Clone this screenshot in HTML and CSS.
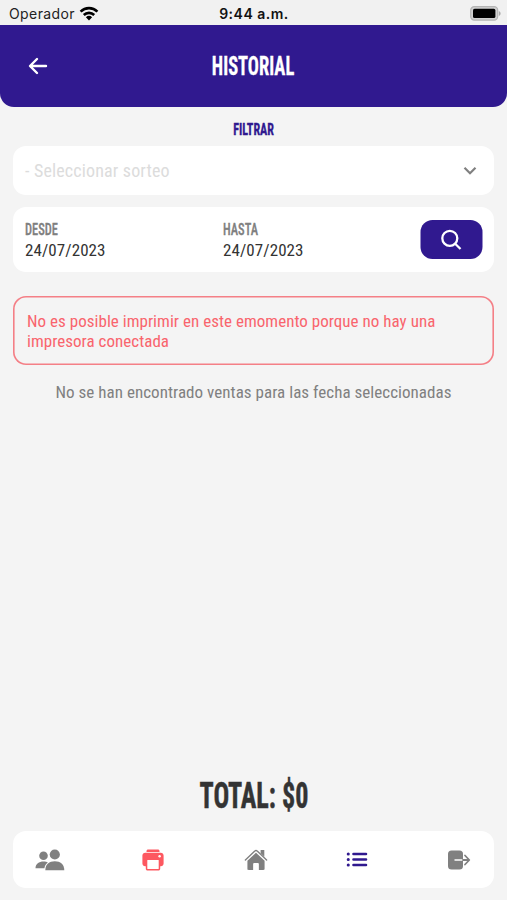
FILE: index.html
```html
<!DOCTYPE html>
<html lang="es">
<head>
  <meta charset="UTF-8" />
  <meta name="viewport" content="width=device-width, initial-scale=1.0" />
  <title>Historial</title>
  <link rel="stylesheet" href="styles.css">
</head>
<body>
  <div class="status-bar">
    <div class="carrier">
      <span>Operador</span>
      <svg width="20" height="15" viewBox="0 0 20 15" fill="none" stroke="#000" stroke-width="2.6">
        <path d="M1.6 5.6a12 12 0 0 1 16.8 0" />
        <path d="M4.8 9a7.4 7.4 0 0 1 10.4 0" />
        <path d="M10 14.4L6.9 11.2a4.5 4.5 0 0 1 6.2 0z" fill="#000" stroke="none" />
      </svg>
    </div>
    <span class="time">9:44 a.m.</span>
    <svg class="battery" width="31" height="15" viewBox="0 0 31 15">
      <rect x="0.7" y="0.7" width="27" height="13.4" rx="3.6" fill="#d0d0d0" stroke="#b4b4b4" stroke-width="1.2" />
      <rect x="3" y="2.8" width="22.4" height="9.2" rx="1.6" fill="#000" />
      <path d="M28.8 5v5c2.4-.8 2.4-4.2 0-5z" fill="#aaa" />
    </svg>
  </div>

  <header class="header">
    <svg class="back" width="20" height="18" viewBox="0 0 20 18" fill="none" stroke="#fff" stroke-width="2.4" stroke-linecap="round" stroke-linejoin="round">
      <path d="M18 9H2.5M9 2L2 9l7 7" />
    </svg>
    <h1><span class="narrow">HISTORIAL</span></h1>
  </header>

  <main class="content">
    <h2><span class="narrow">FILTRAR</span></h2>

    <div class="card select">
      <span class="placeholder">- Seleccionar sorteo</span>
      <svg width="14" height="10" viewBox="0 0 14 10" fill="none" stroke="#808080" stroke-width="2.2">
        <path d="M1.5 1.7L7 7.2l5.5-5.5" />
      </svg>
    </div>

    <div class="card dates">
      <div class="date">
        <span class="label">DESDE</span>
        <span class="value">24/07/2023</span>
      </div>
      <div class="date">
        <span class="label">HASTA</span>
        <span class="value">24/07/2023</span>
      </div>
      <button class="search" aria-label="Buscar">
        <svg width="22" height="22" viewBox="0 0 22 22" fill="none" stroke="#fff" stroke-width="2.3">
          <circle cx="9.3" cy="9.3" r="7.5" />
          <path d="M14.7 14.7l5.3 5.3" />
        </svg>
      </button>
    </div>

    <div class="alert">
      <span class="line">No es posible imprimir en este emomento porque no hay una</span>
      <span class="line">impresora conectada</span>
    </div>

    <p class="empty">No se han encontrado ventas para las fecha seleccionadas</p>
  </main>

  <div class="total"><span class="total-text">TOTAL: $0</span></div>

  <nav class="tabs">
    <svg width="30" height="22" viewBox="0 0 30 22" fill="#808080">
      <circle cx="8.5" cy="6.7" r="4.3" />
      <circle cx="19.8" cy="5.5" r="5.1" />
      <path d="M.5 19.2c0-4.300 3.500-6.700 8-6.700 2 0 3.200.3 4.300.9-2 1.500-3 3.300-3.400 5.800z" />
      <path d="M10.300 21.200c0-5.700 4-8.900 9.500-8.900s9.500 3.200 9.500 8.900z" />
    </svg>
    <svg width="22" height="22" viewBox="0 0 22 22">
      <path d="M4.500 2.900V2c0-1 .7-1.600 1.600-1.600h9.800c.9 0 1.600.6 1.600 1.600v.9z" fill="#fd5860" />
      <path d="M3.300 3.700h15.400c1.700 0 2.900 1.200 2.900 2.900v7.900c0 1.500-1.200 2.700-2.700 2.700h-.7v2.500c0 1-.8 1.800-1.800 1.800H5.600c-1 0-1.800-.8-1.800-1.800v-2.500h-.7c-1.500 0-2.700-1.200-2.700-2.700V6.600c0-1.700 1.200-2.900 2.900-2.900z" fill="#fd5860" />
      <rect x="5.300" y="11" width="11.400" height="9" rx=".6" fill="#fff" />
      <circle cx="17.600" cy="7.300" r="1.200" fill="#fff" />
    </svg>
    <svg width="24" height="24" viewBox="0 0 26 24">
      <path d="M1.500 12L11.700 2.300c.8-.8 1.800-.8 2.600 0L24.500 12" fill="none" stroke="#808080" stroke-width="1.500" stroke-linecap="round" />
      <path d="M18 1.200h4v7.200l-4-3.700z" fill="#808080" />
      <path d="M13 4.100l9.300 8.700v8.700c0 .8-.5 1.300-1.300 1.300h-4.900v-6.500c0-.7-.4-1.100-1.100-1.100h-4c-.7 0-1.100.4-1.100 1.100v6.500H5c-.8 0-1.300-.5-1.300-1.300v-8.700z" fill="#808080" />
    </svg>
    <svg width="22" height="16" viewBox="0 0 22 16" fill="none" stroke="#30198f" stroke-width="2.600" stroke-linecap="round">
      <path d="M7.500 2h12.500M7.500 7.500h12.500M7.500 13h12.500" />
      <path d="M2.200 2h.1M2.200 7.500h.1M2.200 13h.1" stroke-width="3" />
    </svg>
    <svg width="24" height="20" viewBox="0 0 24 20">
      <rect x="1" y=".5" width="15" height="19" rx="3.500" fill="#808080" />
      <path d="M7.500 10H16" stroke="#fff" stroke-width="1.500" />
      <path d="M16 10h6M18 5.500L22.300 10 18 14.500" fill="none" stroke="#808080" stroke-width="1.800" stroke-linecap="round" stroke-linejoin="round" />
    </svg>
  </nav>
</body>
</html>
```
FILE: styles.css
```css
:root {
  --primary: #30198f;
  --danger: #f9646d;
  --gray: #808080;
}

* {
  box-sizing: border-box;
}

body {
  margin: 0;
  height: 100vh;
  display: flex;
  flex-direction: column;
  background: #f4f4f4;
  color: #333;
  font-family: 'Roboto Condensed', Roboto, sans-serif;
  font-stretch: 75%;
  font-size: 18px;
}

h1, h2, p {
  margin: 0;
}

svg {
  display: block;
  flex: none;
}

.status-bar {
  height: 25px;
  padding: 2px 6px 0 9px;
  display: grid;
  grid-template-columns: 1fr auto 1fr;
  align-items: center;
  background: #f1f1f1;
  font-family: Inter, sans-serif;
  font-stretch: normal;
  font-size: 14px;
  color: #222;
}

.carrier {
  display: flex;
  align-items: center;
  gap: 4px;
  letter-spacing: 0.4px;
}

.time {
  font-weight: 600;
  letter-spacing: 0.5px;
  margin-right: 2px;
  color: #111;
}

.battery {
  justify-self: end;
}

.header {
  height: 82px;
  padding: 0 28px;
  display: grid;
  grid-template-columns: 20px 1fr 20px;
  align-items: center;
  background: var(--primary);
  border-radius: 0 0 14px 14px;
  color: #fff;
  text-align: center;
}

.header h1 {
  font-size: 26px;
  line-height: 30px;
}

/* tall, tight lettering for the headings */
.narrow {
  display: inline-block;
  white-space: nowrap;
  transform: scaleX(0.71);
  -webkit-text-stroke: 0.3px currentColor;
}

.content {
  flex: 1;
  padding: 12px 13px 0;
}

.content h2 {
  font-size: 17px;
  line-height: 20px;
  text-align: center;
  color: var(--primary);
}

.card {
  background: #fff;
  border-radius: 13px;
  padding: 0 12px;
}

.select {
  height: 49px;
  margin-top: 7px;
  display: flex;
  align-items: center;
  justify-content: space-between;
  padding-right: 17px;
  color: #dcdcdc;
  letter-spacing: 0.15px;
}

.dates {
  height: 65px;
  margin-top: 12px;
  display: grid;
  grid-template-columns: 198px 1fr 62px;
  align-items: center;
}

.date {
  display: flex;
  flex-direction: column;
  align-items: flex-start;
  padding-top: 1px;
}

.label {
  font-size: 17px;
  font-weight: 500;
  line-height: 20px;
  color: var(--gray);
  transform: scaleX(0.73);
  transform-origin: left;
  -webkit-text-stroke: 0.3px currentColor;
}

.value {
  font-size: 17px;
  line-height: 22px;
  letter-spacing: 0.08px;
}

.search {
  width: 62px;
  height: 39px;
  padding: 0;
  display: flex;
  align-items: center;
  justify-content: center;
  border: 0;
  border-radius: 12px;
  background: var(--primary);
  transform: translateX(0.5px);
}

.alert {
  height: 69px;
  margin-top: 24px;
  padding: 15px 14px;
  box-shadow: inset 0 0 0 1.6px #f47f86;
  border-radius: 13px;
  color: var(--danger);
  font-size: 17px;
  line-height: 20px;
  letter-spacing: 0.03px;
}

.alert .line {
  display: block;
  white-space: nowrap;
}

.empty {
  margin-top: 17px;
  font-size: 17px;
  line-height: 21px;
  letter-spacing: 0.04px;
  text-align: center;
  white-space: nowrap;
  color: var(--gray);
}

.total {
  height: 72px;
  text-align: center;
  font-size: 36px;
  font-weight: 700;
  line-height: 74px;
}

.total-text {
  display: inline-block;
  transform: scaleX(0.725);
  -webkit-text-stroke: 0.5px currentColor;
}

.tabs {
  height: 57px;
  margin: 0 13px 12px;
  padding: 0 23px 0 22px;
  display: grid;
  grid-template-columns: 107px 102px 102px 101px 24px;
  align-items: center;
  background: #fff;
  border-radius: 13px;
}
```
